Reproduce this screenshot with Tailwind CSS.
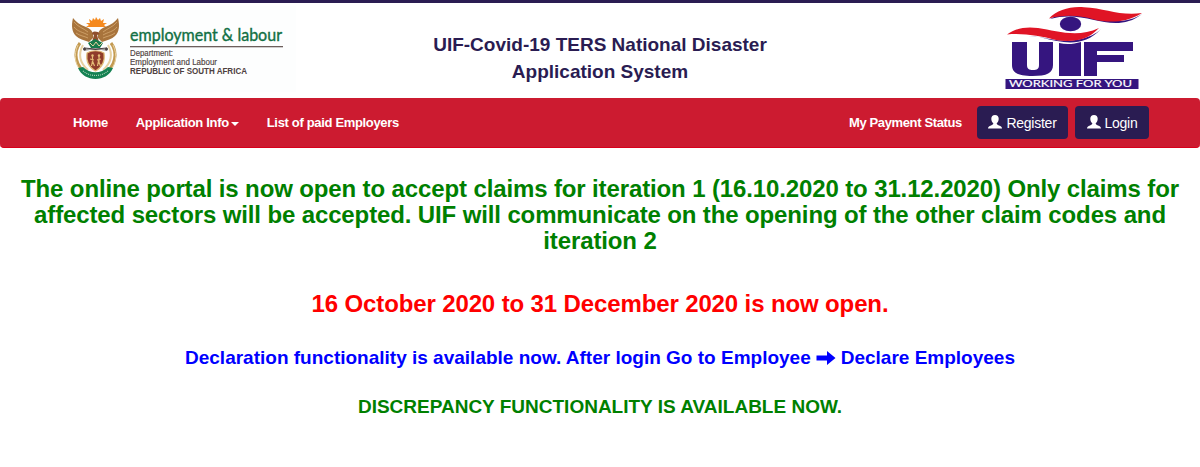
<!DOCTYPE html>
<html lang="en">
<head>
    <meta charset="UTF-8">
    <meta name="viewport" content="width=device-width, initial-scale=1.0">
    <title>UIF-Covid-19 TERS National Disaster Application System</title>
    <script src="https://cdn.jsdelivr.net/npm/@tailwindcss/browser@4"></script>
</head>
<body class="bg-white font-['Liberation_Sans',Arial,sans-serif] overflow-hidden">
    <!-- Header -->
    <header class="h-[98px] border-t-3 border-[#2a1c52] grid grid-cols-[400px_400px_400px]">
        <!-- Department logo -->
        <svg class="ml-[60px] w-[240px] h-[95px] overflow-visible" viewBox="0 3 240 95">
            <rect x="0" y="6" width="236" height="86" fill="#fdfefe"/>
            <!-- Sun -->
            <path d="M26 27l3-2-3-2 4 0-1-4 3 2 1-3 2 2 1-3 2 3 2-2 1 3 3-2-1 4 4 0-3 2 2 2z" fill="#f58a1f"/>
            <!-- Wings -->
            <path d="M13 18c-2 8-1 14 3 18 3 3 8 4 13 6l4-4c1-6-2-9-7-11-6-2-10-5-13-9z" fill="#a8743c"/>
            <path d="M58 18c2 8 1 14-3 18-3 3-8 4-13 6l-4-4c-1-6 2-9 7-11 6-2 10-5 13-9z" fill="#a8743c"/>
            <path d="M14 22c4 5 9 6 14 10M14 27c4 5 9 5 14 8M16 33c4 3 8 3 12 5M57 22c-4 5-9 6-14 10M57 27c-4 5-9 5-14 8M55 33c-4 3-8 3-12 5" fill="none" stroke="#ddb27a" stroke-width=".7"/>
            <!-- Bird head and body -->
            <path d="M32 34c0-3 3-3 6-2l2 2-3 1 2 7h-7l2-7z" fill="#8f4f2d"/>
            <path d="M28 43l7-4 8 4-3 5h-9z" fill="#197a4b"/>
            <path d="M30 43l3 3 3-4 3 4 3-3" fill="none" stroke="#ead1a0" stroke-width="1"/>
            <!-- Tusks and wheat -->
            <path d="M20 43c-7 9-5 24 8 31M51 43c7 9 5 24-8 31" fill="none" stroke="#c39a51" stroke-width="3"/>
            <path d="M23 45c-5 9-3 18 5 25M48 45c5 9 3 18-5 25" fill="none" stroke="#e7d0a0" stroke-width="2"/>
            <path d="M18 45c-5 10-3 21 5 28M53 45c5 10 3 21-5 28" fill="none" stroke="#e7d0a0" stroke-width="1"/>
            <!-- Spear and knobkierie -->
            <path d="M24 48l23 2M47 48l-23 2" stroke="#4a4040" stroke-width="1.2"/>
            <circle cx="24.500" cy="49" r="1.500" fill="#4a4040"/>
            <circle cx="46.500" cy="49" r="1.500" fill="#4a4040"/>
            <!-- Shield -->
            <path d="M27 53c5-3 12-3 17 0 1 7-1 14-8.500 18C28 67 26 60 27 53z" fill="#8f3c2b" stroke="#e2bd79" stroke-width="1.200"/>
            <path d="M32.500 56v6M39 56v6M30 59l4 1M41 59l-4 1M31.500 66l1-5 2 5M37.500 66l1-5 2 5" stroke="#e5bd77" stroke-width="1.200" fill="none"/>
            <circle cx="32.500" cy="55.500" r="1.200" fill="#e5bd77"/>
            <circle cx="39" cy="55.500" r="1.200" fill="#e5bd77"/>
            <!-- Motto band -->
            <path d="M18 68l5-1c7 7 18 7 25 0l5 1c-3 7-10 11-17.500 11S21 75 18 68z" fill="#158253"/>
            <path d="M23 71c7 6 18 6 25 0" fill="none" stroke="#a6d0b4" stroke-width="1.200" stroke-dasharray="1 1"/>
            <text x="70" y="41.200" font-family="Lato, sans-serif" font-size="17.500" fill="#127044" stroke="#127044" stroke-width=".4" textLength="152" lengthAdjust="spacingAndGlyphs">employment &amp; labour</text>
            <rect x="70" y="46" width="153" height="1.300" fill="#6c5f5c"/>
            <g fill="#4d4140" font-size="8.500">
                <text x="70" y="55.500" stroke="#4d4140" stroke-width=".15" textLength="43" lengthAdjust="spacingAndGlyphs">Department:</text>
                <text x="70" y="64.500" stroke="#4d4140" stroke-width=".15" textLength="87" lengthAdjust="spacingAndGlyphs">Employment and Labour</text>
                <text x="70" y="73.500" font-weight="bold" textLength="117" lengthAdjust="spacingAndGlyphs">REPUBLIC OF SOUTH AFRICA</text>
            </g>
        </svg>
        <h1 class="pt-[28px] text-center text-[19px] leading-[27px] font-bold text-[#2a1c52]">UIF-Covid-19 TERS National Disaster<br>Application System</h1>
        <!-- UIF logo -->
        <svg class="ml-[190px] w-[170px] h-[95px] overflow-visible" viewBox="0 3 170 95">
            <!-- Eye -->
            <path d="M60 19C70 14 80 11 92 13c18 4 38 15 60 1-16 13-34 9-48 6-16-4-30-5-44-1z" fill="#35157f"/>
            <path d="M59 18.500C67 10 80 6 94 7.200c21 1 36 9 58 5.800-16 10-33 10-48 6.500-16-5-32-4.500-45-1z" fill="#e01425"/>
            <path d="M38 36c20 1 34 8 53 3 8-2 15-5 20-10-13 14-28 15-44 12-11-2-19-5-29-5z" fill="#35157f"/>
            <path d="M17 34.500C26 28 36 26.500 48 28c19 3 40 10 61 0-12 13-27 14.500-43 12-16-4-32-7-49-5.500z" fill="#e01425"/>
            <ellipse cx="80.500" cy="24" rx="10.700" ry="7.300" fill="#35157f"/>
            <!-- Letters -->
            <g fill="#35157f">
                <path d="M22 42h15v23c0 4 2 5 6 5s6-1 6-5V42h14v23c0 8-6 11-20.500 11S22 73 22 65z"/>
                <path d="M69 43c8 2 15 1 22-1v34H69z"/>
                <path d="M94 42h49v9h-36v4h27v7h-27v14H94z"/>
                <rect x="15.500" y="79" width="133" height="10"/>
            </g>
            <text x="19" y="87.400" font-family="Lato, sans-serif" font-size="9.500" fill="#fff" stroke="#fff" stroke-width=".15" textLength="123" lengthAdjust="spacingAndGlyphs">WORKING FOR YOU</text>
        </svg>
    </header>

    <!-- Navigation -->
    <nav class="h-[50px] rounded bg-[#cc1b30] border-b border-[#d9001b] text-white text-[13px] font-bold flex justify-between items-center pl-[73px] pr-[51px]">
        <div class="flex tracking-[-0.33px]">
            <a class="mr-[28px]">Home</a>
            <a class="mr-[28px] flex items-center">Application Info
                <span class="ml-[2px] mt-[2px] border-x-4 border-t-4 border-x-transparent border-t-white"></span>
            </a>
            <a>List of paid Employers</a>
        </div>
        <div class="flex items-center">
            <a class="mr-[15px] tracking-[-0.36px]">My Payment Status</a>
            <a class="mr-[7px] w-[91px] h-[33px] pt-px rounded bg-[#2a1c52] flex items-center justify-center gap-1 text-[14px] font-normal tracking-[-0.25px]">
                <svg class="w-[14px] h-[14px] mb-[2px]" viewBox="0 0 14 14" fill="currentColor"><path d="M7 0c2.400 0 3.700 1.600 3.700 3.800 0 2-.9 3.700-2 4.500 0 1.200.8 1.500 2.300 2.100 2 .8 3 1.300 3 3.100H0c0-1.800 1-2.300 3-3.100 1.500-.6 2.300-.9 2.300-2.100-1.100-.8-2-2.500-2-4.500C3.300 1.600 4.600 0 7 0z"/></svg>
                Register
            </a>
            <a class="w-[74px] h-[33px] pt-px rounded bg-[#2a1c52] flex items-center justify-center gap-1 text-[14px] font-normal tracking-[-0.3px]">
                <svg class="w-[14px] h-[14px] mb-[2px]" viewBox="0 0 14 14" fill="currentColor"><path d="M7 0c2.400 0 3.700 1.600 3.700 3.800 0 2-.9 3.700-2 4.500 0 1.200.8 1.500 2.300 2.100 2 .8 3 1.300 3 3.100H0c0-1.800 1-2.300 3-3.100 1.500-.6 2.300-.9 2.300-2.100-1.100-.8-2-2.500-2-4.500C3.300 1.600 4.600 0 7 0z"/></svg>
                Login
            </a>
        </div>
    </nav>

    <!-- Announcements -->
    <main class="pt-[28px] text-center font-bold whitespace-nowrap">
        <h2 class="text-[24px] leading-[26px] tracking-[-0.125px] text-[#008000]">The online portal is now open to accept claims for iteration 1 (16.10.2020 to 31.12.2020) Only claims for<br>affected sectors will be accepted. UIF will communicate on the opening of the other claim codes and<br>iteration 2</h2>
        <h2 class="mt-[37px] text-[24px] leading-[26px] tracking-[-0.125px] text-[#ff0000]">16 October 2020 to 31 December 2020 is now open.</h2>
        <h3 class="mt-[30px] text-[19px] leading-[22px] text-[#0000ff] flex justify-center items-center">Declaration functionality is available now. After login Go to Employee
            <svg class="mx-[5px] w-[20px] h-[18px]" viewBox="0 0 20 18" fill="currentColor"><path d="M.5 6.500h10.500V2l8.500 7-8.500 7v-4.500H.5z"/></svg>
            Declare Employees</h3>
        <h3 class="mt-[27px] text-[19px] leading-[22px] text-[#008000]">DISCREPANCY FUNCTIONALITY IS AVAILABLE NOW.</h3>
    </main>
</body>
</html>
